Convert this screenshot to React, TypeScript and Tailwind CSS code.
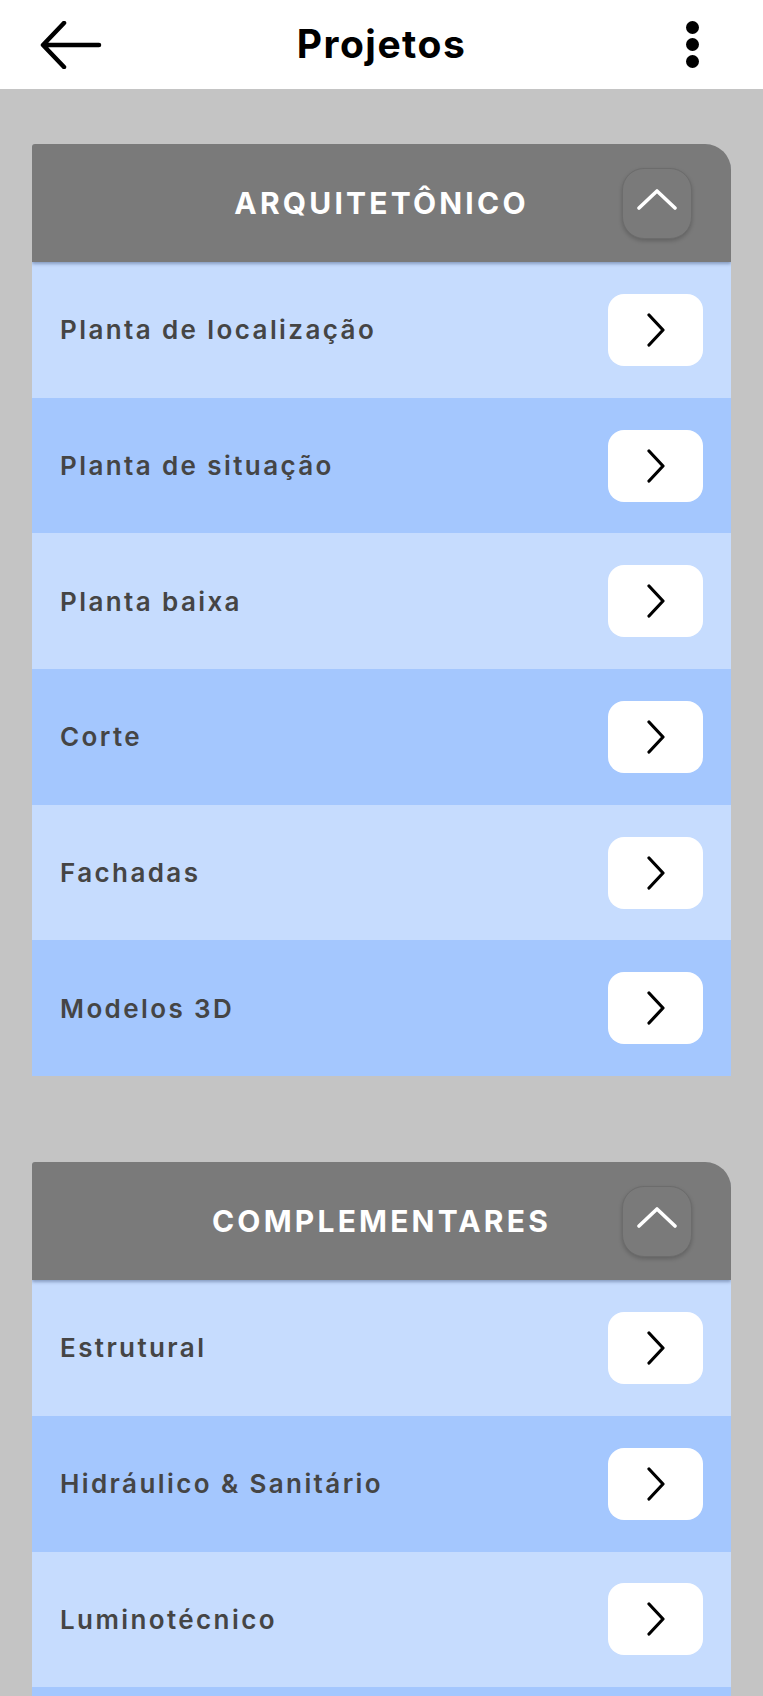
import React from 'react';

type Section = {
  title: string;
  items: string[];
};

const sections: Section[] = [
  {
    title: 'ARQUITETÔNICO',
    items: [
      'Planta de localização',
      'Planta de situação',
      'Planta baixa',
      'Corte',
      'Fachadas',
      'Modelos 3D',
    ],
  },
  {
    title: 'COMPLEMENTARES',
    // last row runs past the bottom of the screen
    items: ['Estrutural', 'Hidráulico & Sanitário', 'Luminotécnico', ''],
  },
];

const ChevronRight: React.FC = () => (
  <svg width="20" height="34" viewBox="0 0 20 34" fill="none">
    <path d="M3 2l14 15L3 32" stroke="#000" strokeWidth="3.2" strokeLinecap="round" strokeLinejoin="round" />
  </svg>
);

const ChevronUp: React.FC = () => (
  <svg width="40" height="22" viewBox="0 0 40 22" fill="none">
    <path d="M2 19L20 2l18 17" stroke="#fff" strokeWidth="3.6" strokeLinecap="round" strokeLinejoin="round" />
  </svg>
);

const Row: React.FC<{ label: string; dark: boolean }> = ({ label, dark }) => (
  <div
    className={`flex h-[135.7px] items-center justify-between pl-[28px] pr-[28px] ${
      dark ? 'bg-[#a4c7fe]' : 'bg-[#c6dcfe]'
    }`}
  >
    <span className="text-[26px] font-semibold tracking-[2.4px] text-[#454545]">{label}</span>
    <button className="flex h-[72px] w-[95px] items-center justify-center rounded-[16px] bg-white">
      <ChevronRight />
    </button>
  </div>
);

const Card: React.FC<{ section: Section }> = ({ section }) => (
  <div className="overflow-hidden rounded-tl-[3px] rounded-tr-[26px]">
    <div className="relative z-10 grid h-[118px] grid-cols-[1fr_auto_1fr] items-center bg-[#7a7a7a] shadow-[0_2px_3px_rgba(60,80,120,0.45)]">
      <div />
      <h2 className="text-[30px] font-bold tracking-[3.2px] text-white">{section.title}</h2>
      <div className="flex justify-end pr-[39px]">
        <button className="flex h-[71px] w-[70px] items-center justify-center rounded-[22px] border border-[#6c6c6c] bg-[#7a7a7a] pb-[6px] shadow-[0_2px_4px_rgba(0,0,0,0.2)]">
          <ChevronUp />
        </button>
      </div>
    </div>
    {section.items.map((item, i) => (
      <Row key={i} label={item} dark={i % 2 === 1} />
    ))}
  </div>
);

const App: React.FC = () => {
  return (
    <div className="min-h-screen bg-[#c4c4c4] font-['Inter',sans-serif]">
      <header className="grid h-[89px] grid-cols-[1fr_auto_1fr] items-center bg-white">
        <div className="pl-[40px]">
          <button className="block">
            <svg width="62" height="48" viewBox="0 0 62 48" fill="none">
              <path
                d="M59 24H4M24 2L3 24l21 22"
                stroke="#000"
                strokeWidth="4.5"
                strokeLinecap="round"
                strokeLinejoin="round"
              />
            </svg>
          </button>
        </div>
        <h1 className="text-[39px] font-bold tracking-[1.5px] text-black">Projetos</h1>
        <div className="flex justify-end pr-[64px]">
          <button className="flex flex-col items-center gap-[4px]">
            <span className="block h-[13px] w-[13px] rounded-full bg-black" />
            <span className="block h-[13px] w-[13px] rounded-full bg-black" />
            <span className="block h-[13px] w-[13px] rounded-full bg-black" />
          </button>
        </div>
      </header>

      <main className="flex flex-col gap-[86px] px-[32px] pt-[55px] pb-[40px]">
        {sections.map((s) => (
          <Card key={s.title} section={s} />
        ))}
      </main>
    </div>
  );
};

export default App;
